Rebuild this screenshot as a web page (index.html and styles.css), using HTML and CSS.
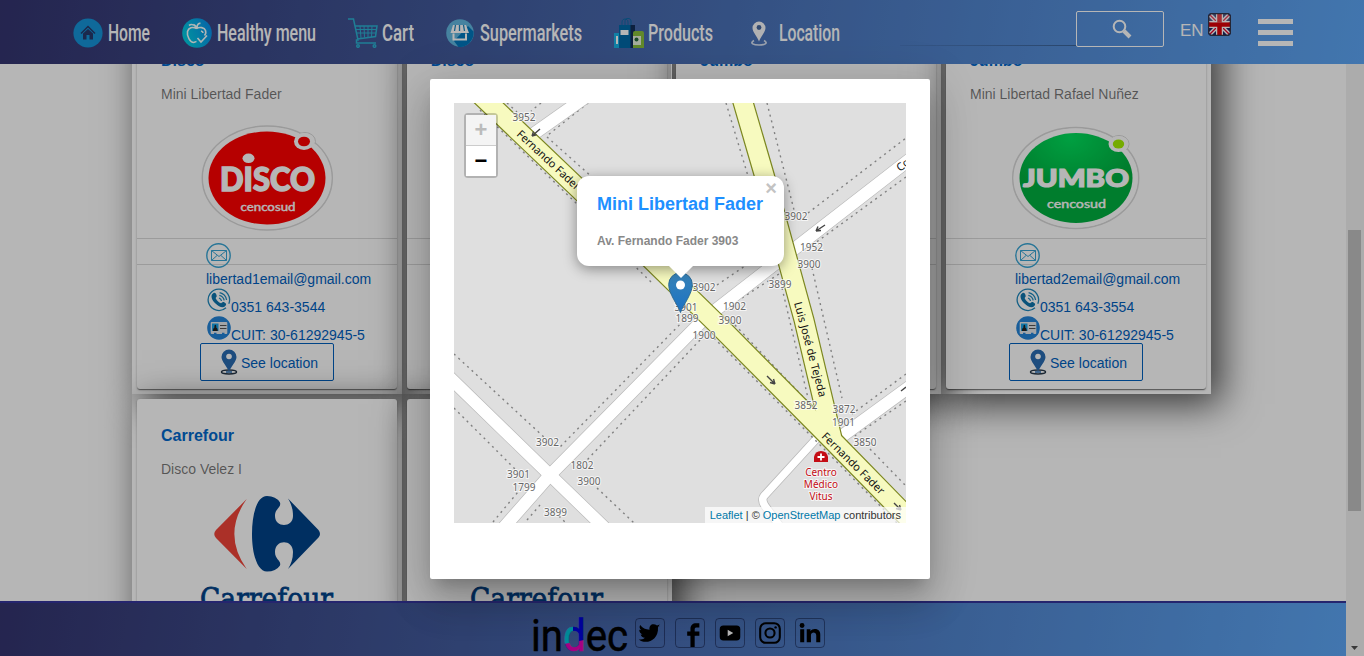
FILE: index.html
```html
<!DOCTYPE html>
<html lang="en">
<head>
<meta charset="utf-8">
<title>Supermarkets</title>
<link rel="stylesheet" href="styles.css">
</head>
<body>
<svg class="defs" width="0" height="0">
  <defs>
    <linearGradient id="apple" x1="0" y1="0.6" x2="1" y2="0.2"><stop offset="0" stop-color="#00cfe0"/><stop offset="1" stop-color="#0a8cec"/></linearGradient>
    <radialGradient id="green" cx="0.45" cy="0.05" r="0.6"><stop offset="0" stop-color="#00e05c"/><stop offset="1" stop-color="#00b040"/></radialGradient>
    <linearGradient id="pin" x1="0" y1="0" x2="0" y2="1"><stop offset="0" stop-color="#3883b7"/><stop offset="1" stop-color="#1b72c4"/></linearGradient>
    <pattern id="dletter" patternUnits="userSpaceOnUse" width="98" height="46"><rect width="98" height="46" fill="#0000e0"/><rect width="42" height="46" fill="#00c4d8"/><path d="M28 30L53 25V46H28Z" fill="#e800b8"/></pattern>
  </defs>
  <symbol id="disco" viewBox="200 123 134 110">
    <ellipse cx="267.300" cy="178" rx="65" ry="52" fill="#fff" stroke="#d8d8d8" stroke-width="1.500"/>
    <ellipse cx="305" cy="141.500" rx="10.500" ry="9" fill="#fff" stroke="#d8d8d8"/>
    <ellipse cx="267.300" cy="178" rx="64" ry="51" fill="#fff"/>
    <ellipse cx="267" cy="178" rx="58.500" ry="46.500" fill="#ff0000"/>
    <ellipse cx="304" cy="141.500" rx="10" ry="8.500" fill="#fff"/>
    <ellipse cx="304" cy="141.500" rx="6" ry="4.800" fill="#ff0000"/>
    <ellipse cx="248.500" cy="158.300" rx="6" ry="4.800" fill="#fff"/>
    <text class="disco-word" x="220" y="190.500" textLength="95" lengthAdjust="spacingAndGlyphs">DISCO</text>
    <text class="cenco" x="240.500" y="210.500" textLength="55" lengthAdjust="spacingAndGlyphs">cencosud</text>
  </symbol>
  <symbol id="jumbo" viewBox="1009 123 134 110">
    <ellipse cx="1075.700" cy="178" rx="63" ry="50.500" fill="#fff" stroke="#d8d8d8" stroke-width="1.500"/>
    <ellipse cx="1119" cy="144" rx="10" ry="8.500" fill="#fff" stroke="#d8d8d8"/>
    <ellipse cx="1075.700" cy="178" rx="62" ry="49.500" fill="#fff"/>
    <ellipse cx="1076" cy="178" rx="56.500" ry="45" fill="url(#green)"/>
    <ellipse cx="1118.500" cy="144" rx="10" ry="8" fill="#fff"/>
    <ellipse cx="1118.500" cy="144" rx="5.700" ry="4.500" fill="#a5f000"/>
    <text class="jumbo-word" x="1023" y="186.500" textLength="106" lengthAdjust="spacingAndGlyphs">JUMBO</text>
    <text class="cenco" x="1047" y="208" textLength="59" lengthAdjust="spacingAndGlyphs">cencosud</text>
  </symbol>
  <symbol id="carrefour" viewBox="200 494 134 120">
    <path fill="#f04438" d="M246.700 499Q222 534 246.700 569L216 538Q212.500 534 216 530Z"/>
    <path fill="#004289" d="M267 496Q276 496 280 502.500C281.500 508 275 508 275 516C275 528 293 528 293 516C293 508 291 504 288 498.500L318.500 530Q321.500 534 318.500 537.500L288 569C291 564 293 559 293 552C293 539 275 539 275 552C275 560 281.500 560 280 565.500Q276 571.500 267 571.500C257 571.500 252 553 252 534C252 514 257 496 267 496Z"/>
    <text class="carre-word" x="200" y="608.500" textLength="133" lengthAdjust="spacingAndGlyphs">Carrefour</text>
  </symbol>
  <symbol id="mail" viewBox="0 0 25 25"><g fill="none" stroke="#39a5d4"><circle cx="12.500" cy="12.500" r="11.700" stroke-width="1.400"/><path d="M5.500 7.500h15v10h-15zM5.500 7.500l7.500 6 7.500-6M5.500 17.500l5.500-5M20.500 17.500l-5.500-5" stroke-width="1"/></g></symbol>
  <symbol id="phone" viewBox="0 0 24 24"><path d="M19 19.800a10.700 10.700 0 1 1 2.800-4" fill="none" stroke="#2089bd" stroke-width="1.300"/><path d="M5 6.500c2-2.500 3.500-2 4.500.5.800 1.800-.8 2.300-.8 3.200 1.200 2.600 2.800 4 5.300 5 1-.2 1.300-2 3.200-1 2.500 1.200 2.500 2.600.6 4.300-2 1.600-6 .6-9.300-2.900C4.800 12 3.800 8.500 5 6.500Z" fill="#0f75ad"/><path d="M12 10a4 4 0 0 1 2.500 3M12.300 7.300a6.500 6.500 0 0 1 4.900 5M12.600 4.600a9 9 0 0 1 7 7.400" fill="none" stroke="#2089bd" stroke-width="1.300"/></symbol>
  <symbol id="idcard" viewBox="0 0 24 24"><circle cx="12" cy="12" r="11.800" fill="#2484d8"/><rect x="3.700" y="6" width="16.600" height="12" rx="1" fill="#e4e8ec"/><rect x="5" y="7.500" width="6.500" height="7.500" fill="#16a3e8"/><path d="M6 15c0-3 1-3 1.500-3.500-.8-3.600 2.500-3.600 1.700 0 .5.500 1.500.5 1.500 3.500Z" fill="#222"/><path d="M13 9.500h6.500M13 12.500h6.500" stroke="#555"/><path d="M7 17.500h2.500M15 17.500h2.500" stroke="#2484d8" stroke-width="1.500"/></symbol>
  <symbol id="place" viewBox="0 0 18 26"><ellipse cx="9" cy="23" rx="7.500" ry="1.900" fill="#fff" stroke="#27384a" stroke-width="1.500"/><path d="M9 23C7.500 18 1.500 12.500 1.500 8a7.500 7.500 0 0 1 15 0C16.500 12.500 10.500 18 9 23Z" fill="#2a6cb2"/><circle cx="9" cy="7.500" r="2.800" fill="#fff"/><path d="M6 23h6" stroke="#2a6cb2" stroke-width="1.500"/></symbol>
</svg>

<div class="app">
  <header class="topbar">
    <nav class="nav">
      <a class="nav-item home"><svg width="30" height="30" viewBox="0 0 30 30"><circle cx="15" cy="15" r="14.600" fill="#1593d8"/><path d="M8 15.500l7-7 7 7" fill="none" stroke="#27386b" stroke-width="1.500"/><path d="M10 15.500l5-4.500 5 4.500V21.500h-3.500v-4.500h-3v4.500H10Z" fill="#27386b"/></svg><svg class="word" width="42" height="40"><text x="0" y="27.500" textLength="42" lengthAdjust="spacingAndGlyphs">Home</text></svg></a>
      <a class="nav-item healthy"><svg width="30" height="30" viewBox="0 0 30 30"><circle cx="15" cy="15" r="14.800" fill="url(#apple)"/><path d="M14.500 10.500c-4-2-8-1-9 3-1 5 3 11 6 11 1.500 0 2-1 3-1M14.500 10.500c3-2 8-1 9 2 .8 2.500 0 4-1 5M14.500 10.500c0-2-1-3-3-4M15 9c.5-3 2-4 3.500-3.500M15.500 20l3.500 4 6-6.500M7 7.500c2-1.500 5-1 7 1.500M19 13q2 .5 2 2" fill="none" stroke="#f4ffff" stroke-width="1.600"/></svg><svg class="word" width="99" height="40"><text x="0" y="27.500" textLength="99" lengthAdjust="spacingAndGlyphs">Healthy menu</text></svg></a>
      <a class="nav-item cart"><svg width="30" height="30" viewBox="0 0 30 30"><g fill="none" stroke="#2cb1d2" stroke-width="1.500"><path d="M0 1h5.500L10 22H8.500v3H28M6.500 8H29l-1.500 10.500L9.500 21"/><path d="M8 11.500h20.500M8.500 15H28M12 8l1 12M16 8l.5 11.500M20 8v11.500M24 8l-.5 11" stroke-width="1"/><circle cx="10" cy="28" r="1.300"/><circle cx="26.500" cy="28" r="1.300"/></g></svg><svg class="word" width="32" height="40"><text x="0" y="27.500" textLength="32" lengthAdjust="spacingAndGlyphs">Cart</text></svg></a>
      <a class="nav-item market"><svg width="28" height="28" viewBox="0 0 28 28"><circle cx="14" cy="14" r="13.800" fill="#62b8e0"/><path d="M22 7l5.500 5.500A14 14 0 0 1 12.500 28L8 22Z" fill="#0077bd"/><path d="M7 6h13l3 8H4.500Z" fill="#fff"/><path d="M9.500 6L8.500 12M13.500 6v6M17.500 6l1 6" stroke="#1c86bf" stroke-width="1.300"/><path d="M7.500 14.500v6h12.500v-6" fill="none" stroke="#fff" stroke-width="2"/></svg><svg class="word" width="102" height="40"><text x="0" y="27.500" textLength="102" lengthAdjust="spacingAndGlyphs">Supermarkets</text></svg></a>
      <a class="nav-item products"><svg width="30" height="30" viewBox="0 0 30 30"><path d="M8 8V4c0-4 6-4 6 0v4M11 8V3c0-3.500 6-3.500 6 0v5" fill="none" stroke="#0d6ba8"/><path d="M15 7h6v23h-6z" fill="#122d57"/><path d="M5 7h11.500v23H5z" fill="#0069a8"/><path d="M0 15h5v15H0z" fill="#18b4e8"/><path d="M6.500 12h8v5h-8zM2 18h2v8H2z" fill="#fff"/><path d="M19 15q0-2 2-2h7q2 0 2 2v15H19Z" fill="#88c03c"/><path d="M19 18h8v9h-8z" fill="#e6f1dc"/><circle cx="22.500" cy="21.500" r="2" fill="#236b39"/></svg><svg class="word" width="65" height="40"><text x="0" y="27.500" textLength="65" lengthAdjust="spacingAndGlyphs">Products</text></svg></a>
      <a class="nav-item location"><svg width="16" height="25" viewBox="0 0 16 25"><path d="M3 19.500c-5 3 0 4.500 5 4.500s10-1.500 5-4.500" fill="none" stroke="#d8e2f3" stroke-width="1.700"/><path d="M8 20.500C6.500 16 1.500 11 1.500 7a6.500 6.500 0 0 1 13 0C14.500 11 9.500 16 8 20.500Z" fill="#f8f8fa"/><circle cx="8" cy="6.500" r="2.400" fill="#46689f"/></svg><svg class="word" width="61" height="40"><text x="0" y="27.500" textLength="61" lengthAdjust="spacingAndGlyphs">Location</text></svg></a>
    </nav>
    <div class="search-line"></div>
    <button class="search"><svg width="20" height="20" viewBox="0 0 20 20"><circle cx="7.500" cy="7.500" r="5.800" fill="none" stroke="#fff" stroke-width="2"/><path d="M12 12l6 6" stroke="#fff" stroke-width="4"/></svg></button>
    <span class="lang">EN</span>
    <svg class="flag" width="23" height="23" viewBox="0 0 23 23"><rect width="23" height="23" rx="4" fill="#1d2766"/><path d="M2 2l19 19M21 2L2 21" stroke="#fff" stroke-width="4"/><path d="M2 2l19 19M21 2L2 21" stroke="#e0002a" stroke-width="1.300"/><path d="M11.500 1v21M1 11.500h21" stroke="#fff" stroke-width="7"/><path d="M11.500 1v21M1 11.500h21" stroke="#dc0008" stroke-width="4.500"/><rect x="1" y="1" width="21" height="9" rx="3" fill="#fff" opacity="0.250"/><rect x="0.500" y="0.500" width="22" height="22" rx="4" fill="none" stroke="#34364a" stroke-width="1.500"/></svg>
    <div class="burger"><i></i><i></i><i></i></div>
  </header>

  <div class="body-row">
    <div class="page">
      <main class="content">
        <div class="grid">
          <div class="cell"><article class="card">
            <h3>Disco</h3><p class="sub">Mini Libertad Fader</p>
            <svg class="logo" width="134" height="110"><use href="#disco"/></svg>
            <div class="mail-row"><svg width="25" height="25"><use href="#mail"/></svg></div>
            <div class="contact"><div>libertad1email@gmail.com</div><div class="with-icon"><svg width="24" height="24"><use href="#phone"/></svg>0351 643-3544</div><div class="with-icon"><svg width="24" height="24"><use href="#idcard"/></svg>CUIT: 30-61292945-5</div></div>
            <button class="see"><svg width="18" height="26"><use href="#place"/></svg>See location</button>
          </article></div>
          <div class="cell"><article class="card"><h3>Disco</h3><p class="sub"></p><div class="logo"></div><div class="mail-row"></div></article></div>
          <div class="cell"><article class="card"><h3>Jumbo</h3><p class="sub"></p><div class="logo"></div><div class="mail-row"></div></article></div>
          <div class="cell"><article class="card">
            <h3>Jumbo</h3><p class="sub">Mini Libertad Rafael Nuñez</p>
            <svg class="logo" width="134" height="110"><use href="#jumbo"/></svg>
            <div class="mail-row"><svg width="25" height="25"><use href="#mail"/></svg></div>
            <div class="contact"><div>libertad2email@gmail.com</div><div class="with-icon"><svg width="24" height="24"><use href="#phone"/></svg>0351 643-3554</div><div class="with-icon"><svg width="24" height="24"><use href="#idcard"/></svg>CUIT: 30-61292945-5</div></div>
            <button class="see"><svg width="18" height="26"><use href="#place"/></svg>See location</button>
          </article></div>
          <div class="cell"><article class="card"><h3>Carrefour</h3><p class="sub">Disco Velez I</p><svg class="logo tall" width="134" height="120"><use href="#carrefour"/></svg></article></div>
          <div class="cell"><article class="card"><h3></h3><p class="sub"></p><svg class="logo tall" width="134" height="120"><use href="#carrefour"/></svg></article></div>
        </div>
      </main>
      <footer class="footer">
        <svg class="indec" width="98" height="40" viewBox="0 0 98 40"><text x="0" y="35.500" textLength="97" lengthAdjust="spacingAndGlyphs">in<tspan fill="url(#dletter)" stroke="url(#dletter)">d</tspan>ec</text></svg>
        <a class="social"><svg viewBox="0 0 30 30"><path d="M26 7.500q-1.500 1-2.500 1.300C24.500 19 17 24.500 10.500 24.500 7 24.500 5 23.500 3 22c3 0 5-.5 6.500-2-2.500-.3-4-1.500-4.500-3.500h2C4.500 15.500 3.500 14 3.500 11.500l2 .5C3.500 10 3.500 8 4.500 6.500 7 9.500 10 11.500 14.500 11.500 13.500 5.500 19 4 22.500 7l3-1-2 2.500Z"/></svg></a>
        <a class="social"><svg viewBox="0 0 30 30"><path d="M15.500 30V18H12v-4.500h3.500V10.500c0-4 2.500-6 6-6H25V9h-2.500c-2 0-2.500.5-2.500 2v2.500h5V18h-5v12Z"/></svg></a>
        <a class="social"><svg viewBox="0 0 30 30"><rect x="4" y="7" width="22" height="16" rx="4"/><path d="M12.500 11.500l6 3.500-6 3.500Z" fill="#fff"/></svg></a>
        <a class="social"><svg viewBox="0 0 30 30"><rect x="4.500" y="4.500" width="21" height="21" rx="6" fill="none" stroke="#000" stroke-width="2.200"/><circle cx="15" cy="15" r="4.900" fill="none" stroke="#000" stroke-width="2.200"/><circle cx="21" cy="9" r="1.300"/></svg></a>
        <a class="social"><svg viewBox="0 0 30 30"><circle cx="6.500" cy="7" r="2.600"/><path d="M4.500 11h4.300v14H4.500zM11.500 11h4v2c2-3.500 10.500-3.500 10.500 3.500V25h-4.300v-7.500c0-4-5.700-4-5.700 0V25h-4.500Z"/></svg></a>
      </footer>
    </div>
    <div class="scrollbar"><div class="thumb"></div><svg width="17" height="16"><path d="M5 6h7l-3.500 4Z" fill="#505050"/></svg></div>
  </div>
</div>

<div class="backdrop">
  <section class="dialog">
    <div class="map">
      <svg class="tiles" width="452" height="420" viewBox="454 103 452 420">
        <rect x="454" y="103" width="452" height="420" fill="#dfdfdf"/>
        <g class="dots">
          <path d="M507 103L517 112M541 103L531 111M588 103L548 135M547 137L592 177"/>
          <path d="M726 103L748 176M767 103L794 210M808 213L906 138M906 177L811 246M717 285L745 266M742 298L782 272M812 268L842 398M782 288L808 398"/>
          <path d="M692 312L560 447M700 340L587 460M454 354L545 438M454 408L516 470M493 522L518 492M527 520L540 505M559 516L566 523M597 488L634 523"/>
          <path d="M906 374L852 414M906 401L853 437M870 449L906 486M735 325L807 401M651 282L600 232M665 267L700 303"/>
        </g>
        <g class="road casing"><path d="M499 533L550 475L704 319L914 156"/><path d="M444 372L550 475L612 535"/><path d="M590 94L532 135"/><path d="M916 382L838 439"/><path class="thin" d="M818 437L764 496Q761 500 765 506L779 525"/></g>
        <g class="road white"><path d="M499 533L550 475L704 319L914 156"/><path d="M444 372L550 475L612 535"/><path d="M590 94L532 135"/><path d="M916 382L838 439"/><path class="thin" d="M818 437L764 496Q761 500 765 506L779 525"/></g>
        <path class="main casing" d="M738 85L764.500 176L804 320L832 438"/>
        <path class="main casing" d="M470 85L580 190L718 325L835 443L920 530"/>
        <path class="main yellow" d="M738 85L764.500 176L804 320L832 438"/>
        <path class="main yellow" d="M470 85L580 190L718 325L835 443L920 530"/>
        <path d="M704 319L714 311" stroke="#f7fabf" stroke-width="12"/>
        <g class="dots"><path d="M480 110L577 204M714 338L826 451L898 524"/></g>
        <g class="arrows"><path d="M540 129L532 136M532 136l1.500-4.500M532 136l4.500-1.200M825 225L816 231M816 231l2-4.500M816 231l5-.5M767 376L775 384M775 384l-5-1.500M775 384l-1.500-5M894 503L901 510M901 510l-5-1.500M901 510l-1.500-5M906 387L901 391"/></g>
        <g class="num">
          <text x="524" y="120.500">3952</text><text x="796" y="219.500">3902</text><text x="811.500" y="251">1952</text><text x="809" y="267.500">3900</text><text x="780" y="288">3899</text><text x="704" y="291">3902</text><text x="734.500" y="310">1902</text><text x="686" y="311">3901</text><text x="687" y="321.500">1899</text><text x="730" y="323.500">3900</text><text x="704" y="338.500">1900</text><text x="806" y="409">3852</text><text x="844" y="413">3872</text><text x="843.500" y="426">1901</text><text x="865" y="446">3850</text><text x="547.500" y="446">3902</text><text x="582" y="469">1802</text><text x="518.500" y="478">3901</text><text x="589" y="485">3900</text><text x="524" y="491">1799</text><text x="555.500" y="516">3899</text>
        </g>
        <g class="street">
          <text transform="translate(516 135) rotate(43)" textLength="82">Fernando Fader</text>
          <text transform="translate(821 437) rotate(44.500)" textLength="83">Fernando Fader</text>
          <text transform="translate(794 303) rotate(75)" textLength="98">Luis José de Tejeda</text>
          <text transform="translate(900 172) rotate(-38)">Co</text>
        </g>
        <path d="M814 462v-5q1-6 7-6t7 6v5Z" fill="#c40c14"/><path d="M821 453.500v7M817.500 457h7" stroke="#fff" stroke-width="1.800"/>
        <g class="clinic"><text x="821" y="476">Centro</text><text x="821" y="488">Médico</text><text x="821" y="500">Vitus</text></g>
      </svg>
      <div class="zoom"><span class="off">+</span><span>−</span></div>
      <svg class="marker" width="25" height="41" viewBox="0 0 25 41"><path d="M12.500 40.500C10 33 .7 22 .7 12.500a11.800 11.800 0 0 1 23.600 0C24.300 22 15 33 12.500 40.500Z" fill="url(#pin)" stroke="#2e6c97"/><circle cx="12.500" cy="13" r="4.500" fill="#fff"/></svg>
      <div class="popup"><span class="close">×</span><h2>Mini Libertad Fader</h2><p>Av. Fernando Fader 3903</p></div>
      <div class="credit"><a>Leaflet</a> | © <a>OpenStreetMap</a> contributors</div>
    </div>
  </section>
</div>
</body>
</html>
```
FILE: styles.css
```css
* { box-sizing: border-box; }
html, body { margin: 0; height: 656px; overflow: hidden; }
body { position: relative; background: #fff; font-family: "Liberation Sans", Arial, sans-serif; font-size: 14px; }
.defs { position: absolute; }
.app { display: flex; flex-direction: column; height: 656px; }

.topbar { height: 64px; flex: none; display: flex; align-items: flex-start; background: linear-gradient(100deg, #34346f 0%, #5da6f5 100%); position: relative; z-index: 2; }
.nav { display: flex; height: 64px; align-items: center; padding: 2px 0 0 73px; width: 900px; flex: none; }
.nav-item { display: flex; align-items: center; }
.nav-item .word { margin-top: -1px; }
.nav-item text { font: 500 23px Roboto, sans-serif; fill: #fff; }
.home { gap: 5px; }
.healthy { gap: 5px; margin-left: 32px; }
.cart { gap: 4px; margin-left: 32px; }
.market { gap: 6px; margin-left: 32px; }
.products { gap: 4px; margin-left: 32px; }
.location { gap: 12px; margin-left: 38px; }
.search-line { width: 176px; height: 46px; border-bottom: 1px solid; border-image: linear-gradient(90deg, rgba(0, 0, 0, .05), rgba(0, 0, 0, .3)) 1; border-width: 0 0 1px; flex: none; }
.search { width: 88px; height: 36px; margin-top: 11px; padding: 0; border: 1px solid #fff; border-radius: 2px; background: none; display: flex; align-items: center; justify-content: center; padding-left: 4px; flex: none; }
.lang { margin: 21px 0 0 16px; width: 28px; font-size: 17px; line-height: 20px; color: #fff; }
.flag { margin-top: 13px; }
.burger { margin: 19px 0 0 27px; display: flex; flex-direction: column; gap: 6px; }
.burger i { width: 35px; height: 5px; background: #fff; }

.body-row { flex: 1; display: flex; min-height: 0; }
.page { width: 1346px; display: flex; flex-direction: column; }
.content { height: 537px; overflow: hidden; }
.grid { display: grid; grid-template-columns: repeat(4, 269.670px); grid-auto-rows: 375px; margin: -45px 0 0 132px; }
.cell { width: 270px; padding: 5px; box-shadow: 10px 10px 36px 0 rgba(0, 0, 0, .7); }
.card { height: 365px; background: #fff; border-radius: 3px; padding-top: 24px; overflow: hidden; box-shadow: 0 2px 1px -1px rgba(0, 0, 0, .2), 0 1px 1px rgba(0, 0, 0, .3), 0 1px 3px rgba(0, 0, 0, .2); color: #0060be; }
.card h3 { margin: 0 0 0 24px; height: 24px; font-size: 16px; line-height: 25px; color: #0068cc; }
.sub { margin: 10px 0 0 24px; height: 24px; line-height: 24px; color: rgba(0, 0, 0, .54); }
.logo { display: block; margin: 17px 0 0 63px; width: 134px; height: 110px; }
.logo.tall { margin-top: 13px; height: 120px; }
.disco-word { font: 900 32px Lato, sans-serif; fill: #fff; stroke: #fff; stroke-width: 1.500; }
.jumbo-word { font: 900 24px Lato, sans-serif; fill: #fff; stroke: #fff; stroke-width: 1.200; }
.cenco { font: 400 11px Lato, sans-serif; fill: #fff; stroke: #fff; stroke-width: .4; }
.carre-word { font: 400 30px "DejaVu Serif", serif; fill: #004289; stroke: #004289; stroke-width: .8; }
.mail-row { height: 27px; margin-top: 5px; padding: 4px 0 0 69px; border: solid #d9d9d9; border-width: 1px 0; }
.mail-row svg { display: block; }
.contact { padding-left: 69px; line-height: 28px; }
.contact > div { height: 28px; }
.with-icon { display: flex; }
.with-icon svg { margin: -5px 0 0 1px; }
.see { width: 134px; height: 38px; margin: -6px 0 0 63px; border: 1px solid #0060be; border-radius: 2px; background: none; color: #0060be; font: 14px/16px "Liberation Sans", Arial, sans-serif; display: flex; align-items: center; padding: 2px 0 0 19px; gap: 3px; }
.see svg { margin-top: -2px; }

.footer { height: 55px; border-top: 2px solid #34349a; background: linear-gradient(100deg, #34346f 0%, #5da6f5 100%); display: flex; align-items: flex-start; padding: 15px 0 0 531px; position: relative; z-index: 2; }
.indec { margin: -3px 6px 0 0; overflow: visible; }
.indec text { font: 400 44px Roboto, sans-serif; fill: #000; stroke: #000; stroke-width: .5; }
.social { width: 30px; height: 30px; margin-right: 10px; border: 1px solid rgba(0, 0, 30, .4); border-radius: 4px; }
.social svg { display: block; width: 28px; height: 28px; }

.scrollbar { width: 18px; background: #f1f1f1; display: flex; flex-direction: column; align-items: flex-start; justify-content: space-between; padding-top: 166px; }
.thumb { width: 13px; height: 281px; background: #c1c1c1; margin-left: 2px; }

.backdrop { position: absolute; inset: 0; background: rgba(0, 0, 0, .288); z-index: 5; display: flex; padding: 79px 0 0 430px; align-items: flex-start; }
.dialog { width: 500px; height: 500px; padding: 24px; background: #fff; border-radius: 2px; box-shadow: 0 11px 15px -7px rgba(0, 0, 0, .2), 0 24px 38px 3px rgba(0, 0, 0, .14), 0 9px 46px 8px rgba(0, 0, 0, .12); }
.map { position: relative; width: 452px; height: 420px; overflow: hidden; }
.tiles { display: block; }
.tiles path { stroke-linejoin: round; }
.dots path { fill: none; stroke: #808080; stroke-width: 1.400; stroke-dasharray: 2 4; }
.road path, .main { fill: none; }
.road.casing path { stroke: #b9b9b9; stroke-width: 13.500; }
.road.white path { stroke: #fff; stroke-width: 12.200; }
.road.casing .thin { stroke-width: 9; }
.road.white .thin { stroke-width: 7.500; }
.main.casing { stroke: #7c8720; stroke-width: 21; }
.main.yellow { stroke: #f7fabf; stroke-width: 18.600; }
.arrows path { fill: none; stroke: #444; stroke-width: 1.400; }
.num text { font: 10px "Noto Sans", sans-serif; fill: #666; text-anchor: middle; stroke: rgba(255, 255, 255, .7); stroke-width: 2; paint-order: stroke; }
.street text { font: 11px "Noto Sans", sans-serif; fill: #111; }
.clinic text { font: 10px "Noto Sans", sans-serif; fill: #c40c14; text-anchor: middle; stroke: rgba(255, 255, 255, .7); stroke-width: 2; paint-order: stroke; }

.zoom { position: absolute; left: 10px; top: 10px; border: 2px solid rgba(0, 0, 0, .2); border-radius: 4px; background-clip: padding-box; }
.zoom span { display: block; width: 30px; height: 30px; background: #fff; font: bold 22px/30px "Liberation Sans", sans-serif; text-align: center; color: #000; }
.zoom .off { height: 31px; background: #f4f4f4; color: #bbb; border-bottom: 1px solid #ccc; }
.marker { position: absolute; left: 214px; top: 169px; }
.popup { position: absolute; left: 123px; top: 73px; width: 207px; height: 90px; padding: 17px 20px; background: #fff; border-radius: 12px; box-shadow: 0 3px 14px rgba(0, 0, 0, .4); }
.popup::after { content: ""; position: absolute; left: 91px; top: 89px; border: solid transparent; border-width: 13px 13px 0; border-top-color: #fff; }
.popup h2 { margin: 0; font-size: 18px; line-height: 22px; color: #1e90ff; white-space: nowrap; }
.popup p { margin: 18px 0 0; font-size: 12px; font-weight: bold; line-height: 16px; color: #888; }
.close { position: absolute; right: 7px; top: 3px; font: bold 20px/18px "Liberation Sans", sans-serif; color: #c3c3c3; }
.credit { position: absolute; right: 0; bottom: 0; height: 16px; padding: 0 5px; background: rgba(255, 255, 255, .7); font-size: 11px; line-height: 16px; color: #333; white-space: nowrap; }
.credit a { color: #0078a8; }
```
